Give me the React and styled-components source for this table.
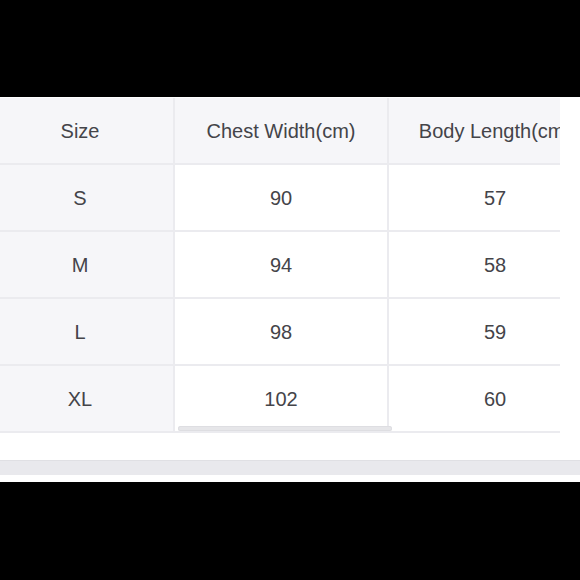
import React from "react";
import styled, { createGlobalStyle } from "styled-components";

const GlobalStyle = createGlobalStyle`
  html, body { margin: 0; padding: 0; background: #000; }
  body { font-family: "Liberation Sans", Arial, sans-serif; }
`;

const Screen = styled.div`
  width: 580px;
  height: 580px;
  padding-top: 97px;
  box-sizing: border-box;
  background: #000;
`;

const Panel = styled.div`
  background: #fff;
  height: 385px;
  padding-top: 1px;
  box-sizing: border-box;
  display: flex;
  flex-direction: column;
`;

const TableWrap = styled.div`
  position: relative;
  width: 560px;
  overflow: hidden;
`;

const Grid = styled.div`
  display: grid;
  grid-template-columns: 188px 214px 214px;
  margin-left: -13px;
`;

const Cell = styled.div`
  box-sizing: border-box;
  height: 67px;
  padding-top: 2px;
  display: flex;
  align-items: center;
  justify-content: center;
  white-space: nowrap;
  font-size: 20px;
  color: #444449;
  border-right: 2px solid #ebebef;
  border-bottom: 2px solid #ebebef;
  background: ${(p) => (p.$shaded ? "#f6f6f9" : "#fff")};
`;

const ScrollThumb = styled.div`
  position: absolute;
  left: 178px;
  bottom: 2px;
  width: 214px;
  height: 5px;
  border-radius: 3px;
  background: #e6e6e9;
  box-shadow: inset 0 0 0 1px #dedee2;
`;

const Footer = styled.div`
  margin-top: 27px;
  height: 15px;
  background: #e9e9ed;
  border-top: 1px solid #e0e0e4;
  box-sizing: border-box;
`;

const headers = ["Size", "Chest Width(cm)", "Body Length(cm)"];
const rows = [
  ["S", "90", "57"],
  ["M", "94", "58"],
  ["L", "98", "59"],
  ["XL", "102", "60"],
];

export default function App() {
  return (
    <>
      <GlobalStyle />
      <Screen>
        <Panel>
          <TableWrap>
            <Grid>
              {headers.map((h) => (
                <Cell key={h} $shaded>
                  {h}
                </Cell>
              ))}
              {rows.map((r) =>
                r.map((v, i) => (
                  <Cell key={r[0] + i} $shaded={i === 0}>
                    {v}
                  </Cell>
                ))
              )}
            </Grid>
            <ScrollThumb />
          </TableWrap>
          <Footer />
        </Panel>
      </Screen>
    </>
  );
}
